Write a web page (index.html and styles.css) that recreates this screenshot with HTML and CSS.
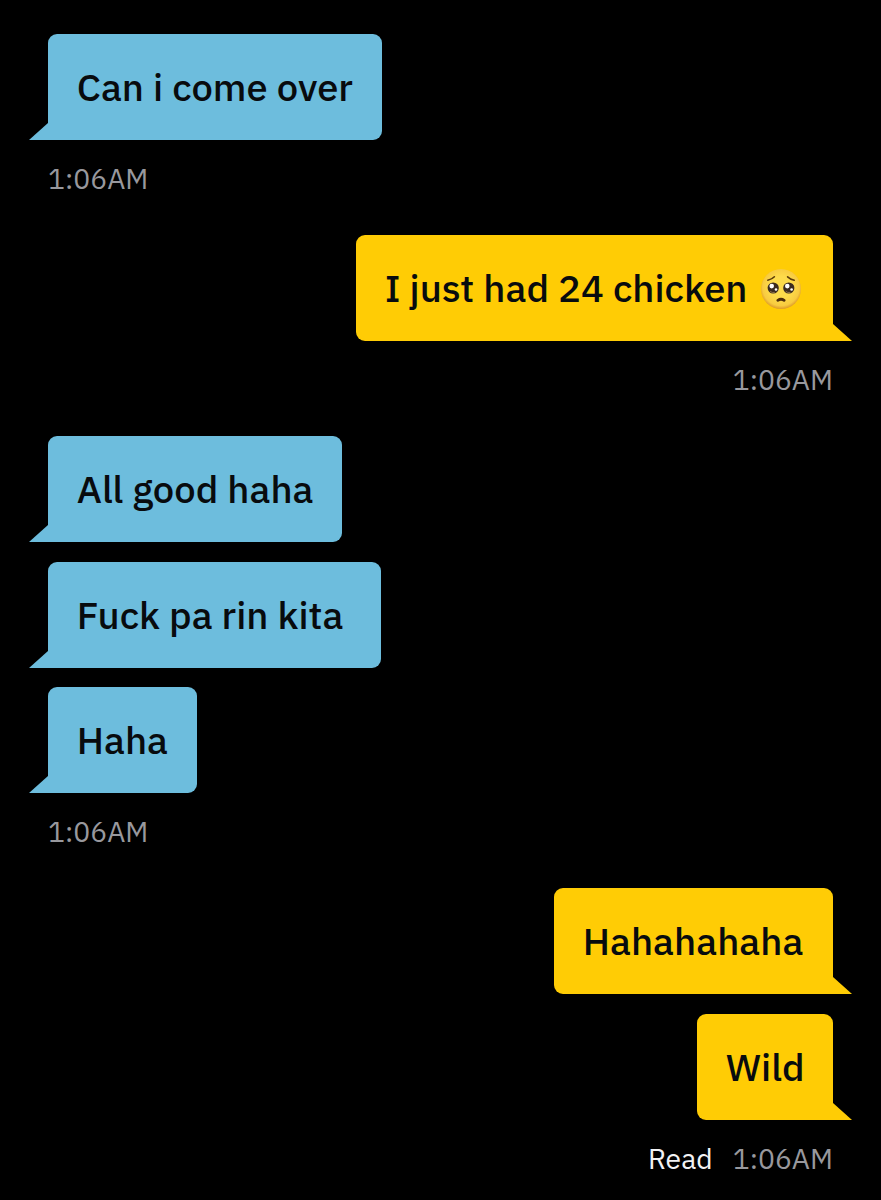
FILE: index.html
```html
<!DOCTYPE html>
<html lang="en">
<head>
  <meta charset="UTF-8">
  <meta name="viewport" content="width=device-width, initial-scale=1.0">
  <title>Chat</title>
  <link rel="stylesheet" href="styles.css">
</head>
<body>
  <main class="chat">
    <section class="group received">
      <div class="bubble come-over">Can i come over</div>
      <div class="meta"><time>1:06AM</time></div>
    </section>

    <section class="group sent">
      <div class="bubble chicken">
        <span>I just had 24 chicken</span>
        <svg class="emoji" viewBox="0 0 42 42" role="img" aria-label="Pleading face">
          <defs>
            <radialGradient id="face" cx="50%" cy="46%" r="54%">
              <stop offset="0.5" stop-color="#fddb4b"/>
              <stop offset="0.85" stop-color="#f8cb40"/>
              <stop offset="1" stop-color="#dd9a2a"/>
            </radialGradient>
          </defs>
          <circle cx="21" cy="21" r="20" fill="url(#face)"/>
          <path d="M7.8 12.2Q12 11.3 14.4 8.8M27.6 8.8Q30.3 11.3 34.2 12.2" fill="none" stroke="#5b3b08" stroke-width="1.6" stroke-linecap="round"/>
          <circle cx="13.2" cy="20" r="5.6" fill="#3b2b20"/>
          <circle cx="28.8" cy="20" r="5.6" fill="#3b2b20"/>
          <circle cx="11.7" cy="18.1" r="2.3" fill="#fff"/>
          <circle cx="27.3" cy="18.1" r="2.3" fill="#fff"/>
          <circle cx="16" cy="21.5" r="1.3" fill="#fff"/>
          <circle cx="31.6" cy="21.5" r="1.3" fill="#fff"/>
          <path d="M10.2 23.3Q12 25.1 14.8 24.4M25.8 23.3Q27.6 25.1 30.4 24.4" fill="none" stroke="#8d714b" stroke-width="1"/>
          <path d="M17.8 32.3Q21 30.2 24.2 32.3" fill="none" stroke="#4d2c0a" stroke-width="2.8" stroke-linecap="round"/>
        </svg>
      </div>
      <div class="meta"><time>1:06AM</time></div>
    </section>

    <section class="group received">
      <div class="bubble all-good">All good haha</div>
      <div class="bubble kita">Fuck pa rin kita</div>
      <div class="bubble haha">Haha</div>
      <div class="meta"><time>1:06AM</time></div>
    </section>

    <section class="group sent">
      <div class="bubble hahaha">Hahahahaha</div>
      <div class="bubble wild">Wild</div>
      <div class="meta"><span class="read">Read</span><time>1:06AM</time></div>
    </section>
  </main>
</body>
</html>
```
FILE: styles.css
```css
* {
    margin: 0;
    padding: 0;
    box-sizing: border-box;
}

body {
    background: #000;
    font-family: "IBM Plex Sans", "Open Sans", sans-serif;
    overflow: hidden;
}

/* Message column */
.chat {
    height: 1200px;
    padding: 34px 48px 0;
}

.group {
    display: flex;
    flex-direction: column;
    align-items: flex-start;
}

.group.sent {
    align-items: flex-end;
}

.bubble {
    position: relative;
    display: flex;
    align-items: center;
    height: 106px;
    padding: 0 31px 0 28.7px;
    border-radius: 9px;
    color: #080b0e;
    font-size: 38.2px;
    font-weight: 500;
    line-height: 52px;
    white-space: nowrap;
}

.bubble + .bubble {
    margin-top: 20px;
}

.received .bubble {
    background: #6dbddd;
    border-bottom-left-radius: 0;
}

.sent .bubble {
    background: #ffcc05;
    border-bottom-right-radius: 0;
}

/* Bubble tails */
.bubble::after {
    content: "";
    position: absolute;
    bottom: 0;
    width: 20px;
    height: 17px;
}

.received .bubble::after {
    left: -19px;
    background: #6dbddd;
    clip-path: polygon(19px 0, 20px 0, 20px 100%, 0 100%);
}

.sent .bubble::after {
    right: -19px;
    background: #ffcc05;
    clip-path: polygon(0 0, 1px 0, 100% 100%, 0 100%);
}

.come-over { width: 334px; }
.chicken { width: 477px; }
.all-good { width: 294px; }
.kita { width: 333px; }
.bubble.haha { width: 149px; margin-top: 19px; }
.hahaha { width: 279px; }
.wild { width: 136px; }

.emoji {
    width: 42px;
    height: 42px;
    margin-top: 2px;
    margin-left: auto;
}

/* Time and read state */
.meta {
    display: flex;
    gap: 20px;
    height: 95px;
    padding-top: 20px;
    color: #98989d;
    font-size: 28.3px;
    line-height: 38px;
}

.read {
    color: #f2f2f4;
}
```
